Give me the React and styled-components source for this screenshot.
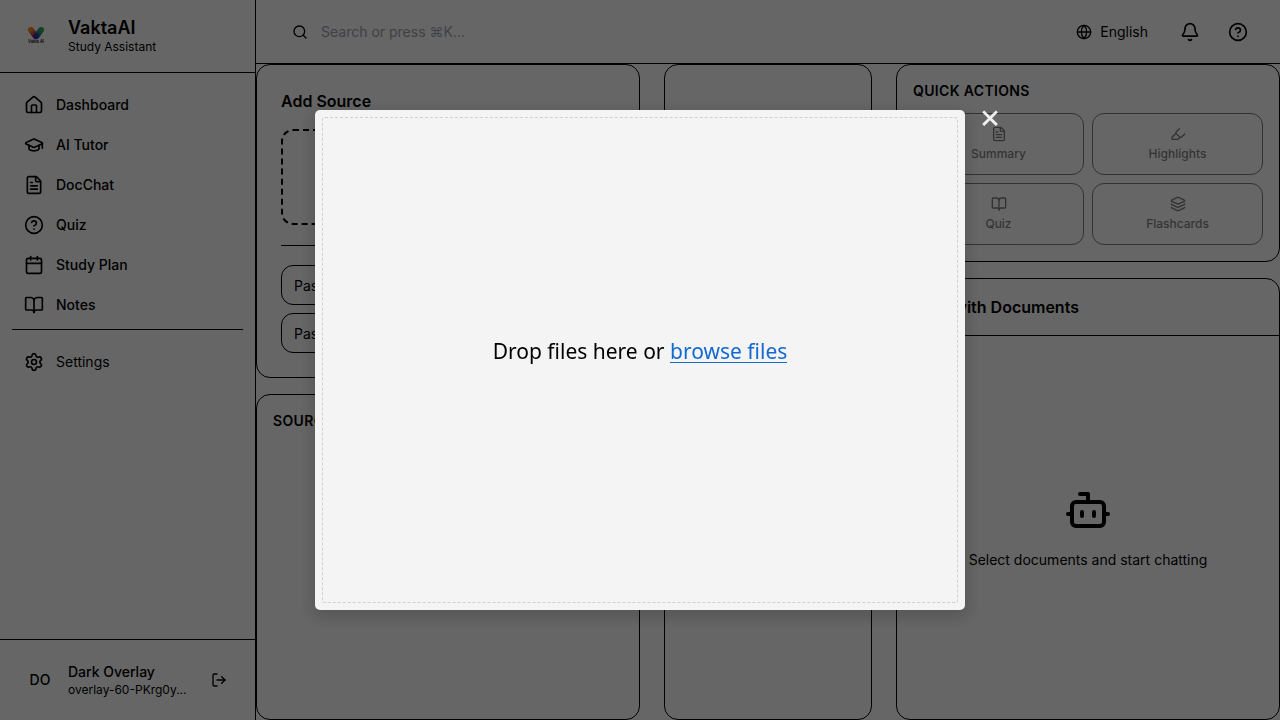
import React from "react";
import styled, { createGlobalStyle } from "styled-components";
import {
  House, GraduationCap, FileText, CircleHelp, Calendar, BookOpen, Settings,
  LogOut, Search, Globe, Bell, Highlighter, Layers, Bot,
} from "lucide-react";

const GlobalStyle = createGlobalStyle`
  *, *::before, *::after { box-sizing: border-box; }
  body { margin: 0; background: #fff; color: #000; font-family: Inter, "Noto Sans", sans-serif; font-size: 14px; line-height: 20px; overflow: hidden; }
  h1, h2, h3, p { margin: 0; }
  button, input { font: inherit; color: inherit; background: none; border: 0; padding: 0; margin: 0; outline: 0; }
  svg { flex-shrink: 0; display: block; }
`;

const Shell = styled.div`display: flex; width: 100vw; height: 100vh; overflow: hidden;`;

const Sidebar = styled.aside`
  width: 256px; flex-shrink: 0; display: flex; flex-direction: column;
  border-right: 1px solid #000;
`;
const Brand = styled.div`
  height: 73px; padding: 16px; display: flex; align-items: center; gap: 12px;
  border-bottom: 1px solid #000;
`;
const LogoBox = styled.div`width: 40px; height: 40px; display: grid; place-items: center;`;
const BrandName = styled.h1`font-size: 18px; line-height: 22.5px; font-weight: 600;`;
const Small = styled.p`
  font-size: 12px; line-height: 16px;
  overflow: hidden; text-overflow: ellipsis; white-space: nowrap;
`;
const Nav = styled.nav`flex: 1; padding: 12px;`;
const NavItem = styled.a`
  height: 40px; padding: 0 12px; display: flex; align-items: center; gap: 12px;
  font-weight: ${(p) => (p.$plain ? 400 : 500)};
`;
const NavDivider = styled.div`height: 1px; background: #000; margin: 4px 0 12px;`;
const Account = styled.div`
  height: 81px; padding: 16px 20px; display: flex; align-items: center; gap: 8px;
  border-top: 1px solid #000;
`;
const Avatar = styled.div`width: 40px; flex-shrink: 0; text-align: center; font-weight: 500;`;
const AccountText = styled.div`flex: 1; min-width: 0; white-space: nowrap;`;
const AccountName = styled.p`font-weight: 500;`;
const LogoutButton = styled.button`width: 32px; flex-shrink: 0; display: grid; place-items: center;`;

const Content = styled.div`flex: 1; min-width: 0; display: flex; flex-direction: column;`;
const TopBar = styled.header`
  height: 64px; padding: 0 32px 0 36px; display: flex; align-items: center;
  border-bottom: 1px solid #000;
`;
const SearchField = styled.label`flex: 1; display: flex; align-items: center; gap: 13px;`;
const SearchInput = styled.input`width: 300px; &::placeholder { color: #9ca3af; opacity: 1; }`;
const TopActions = styled.div`display: flex; align-items: center; gap: 28px;`;
const Language = styled.button`display: flex; align-items: center; gap: 8px; margin-right: 4px;`;

const Board = styled.main`
  flex: 1; min-height: 0; display: grid; gap: 24px;
  grid-template-columns: 384px 1fr 384px;
`;
const Column = styled.section`display: flex; flex-direction: column; gap: 16px; min-height: 0;`;
const Card = styled.div`
  border: 1px solid #000; border-radius: 14px; padding: ${(p) => p.$pad || "0"};
  flex: ${(p) => (p.$fill ? 1 : "none")};
  display: flex; flex-direction: column;
`;
const CardTitle = styled.h2`font-size: 16px; line-height: 24px; font-weight: 600;`;
const Overline = styled.h3`font-size: 14px; line-height: 20px; font-weight: 600; letter-spacing: 0.35px;`;
const DropZone = styled.div`
  height: 96px; margin-top: 16px; border: 2px dashed #000; border-radius: 12px;
`;
const Divider = styled.div`height: 1px; background: #000; margin: 20px 0 19px;`;
const UrlInput = styled.input`
  height: 40px; width: 100%; border: 1px solid #000; border-radius: 12px; padding: 0 12px;
  & + & { margin-top: 8px; }
  &::placeholder { color: #000; opacity: 1; }
`;
const ActionGrid = styled.div`
  margin-top: 12px; display: grid; grid-template-columns: 1fr 1fr; gap: 8px;
`;
const Action = styled.button`
  height: 62px; border: 1px solid #000; border-radius: 12px; opacity: 0.5;
  display: flex; flex-direction: column; align-items: center; justify-content: center; gap: 4px;
  font-size: 12px; line-height: 16px; font-weight: 500;
`;
const ChatHeader = styled.div`
  height: 57px; padding: 0 16px; display: flex; align-items: center; gap: 8px;
  border-bottom: 1px solid #000;
`;
const EmptyChat = styled.div`
  flex: 1; display: flex; flex-direction: column; align-items: center; justify-content: center;
  gap: 16px;
`;

const Overlay = styled.div`
  position: fixed; inset: 0; background: rgba(0, 0, 0, 0.6);
  display: grid; place-items: center;
`;
const Dialog = styled.div`
  position: relative; width: 650px; height: 500px; padding: 7px; border-radius: 5px;
  background: #f4f4f4; box-shadow: 0 5px 15px 4px rgba(0, 0, 0, 0.15);
  font-family: "Noto Sans", sans-serif;
`;
const DialogDrop = styled.div`
  height: 100%; border: 1px dashed #cfcfcf; border-radius: 3px;
  display: grid; place-items: center;
`;
const DropText = styled.p`font-size: 21px; line-height: 30px; padding-bottom: 18px;`;
const Browse = styled.button`
  color: #1269cf; border-bottom: 1px solid #1269cf; line-height: 22px;
`;
const Close = styled.button`
  position: absolute; top: -13px; right: -40px; width: 30px; height: 38px;
  font-family: Inter, sans-serif; font-size: 34px; line-height: 38px;
  color: rgba(255, 255, 255, 0.9);
  display: grid; place-items: center;
`;

const Logo = () => (
  <svg width="18" height="18" viewBox="0 0 18 18">
    <defs>
      <linearGradient id="warm" x1="0" y1="0" x2="0.8" y2="1">
        <stop offset="0" stopColor="#f58a20" />
        <stop offset="0.5" stopColor="#e8483c" />
        <stop offset="1" stopColor="#5b2a8c" />
      </linearGradient>
      <linearGradient id="cool" x1="1" y1="0" x2="0.2" y2="1">
        <stop offset="0" stopColor="#31a84c" />
        <stop offset="0.5" stopColor="#1b8a8a" />
        <stop offset="1" stopColor="#3a3192" />
      </linearGradient>
    </defs>
    <path d="M4 3 L8.5 9" stroke="url(#warm)" strokeWidth="6" strokeLinecap="round" />
    <path d="M14 3 L9.5 9" stroke="url(#cool)" strokeWidth="6" strokeLinecap="round" />
    <text x="9" y="16" textAnchor="middle" fontSize="4.3" fontWeight="500" fontFamily="Inter" textLength="16">Vakta AI</text>
  </svg>
);

const navItems = [
  [House, "Dashboard"],
  [GraduationCap, "AI Tutor"],
  [FileText, "DocChat"],
  [CircleHelp, "Quiz"],
  [Calendar, "Study Plan"],
  [BookOpen, "Notes"],
];

const actions = [
  [FileText, "Summary"],
  [Highlighter, "Highlights"],
  [BookOpen, "Quiz"],
  [Layers, "Flashcards"],
];

export default function App() {
  return (
    <>
      <GlobalStyle />
      <Shell>
        <Sidebar>
          <Brand>
            <LogoBox><Logo /></LogoBox>
            <div>
              <BrandName>VaktaAI</BrandName>
              <Small>Study Assistant</Small>
            </div>
          </Brand>
          <Nav>
            {navItems.map(([Icon, label]) => (
              <NavItem key={label}><Icon size={20} />{label}</NavItem>
            ))}
            <NavDivider />
            <NavItem $plain><Settings size={20} />Settings</NavItem>
          </Nav>
          <Account>
            <Avatar>DO</Avatar>
            <AccountText>
              <AccountName>Dark Overlay</AccountName>
              <Small>overlay-60-PKrg0y...</Small>
            </AccountText>
            <LogoutButton><LogOut size={16} /></LogoutButton>
          </Account>
        </Sidebar>
        <Content>
          <TopBar>
            <SearchField>
              <Search size={16} />
              <SearchInput placeholder="Search or press ⌘K..." />
            </SearchField>
            <TopActions>
              <Language><Globe size={16} />English</Language>
              <Bell size={20} />
              <CircleHelp size={20} />
            </TopActions>
          </TopBar>
          <Board>
            <Column>
              <Card $pad="24px">
                <CardTitle>Add Source</CardTitle>
                <DropZone />
                <Divider />
                <UrlInput placeholder="Paste YouTube URL" />
                <UrlInput placeholder="Paste website URL" />
              </Card>
              <Card $fill $pad="16px">
                <Overline>SOURCES</Overline>
              </Card>
            </Column>
            <Column><Card $fill /></Column>
            <Column>
              <Card $pad="16px">
                <Overline>QUICK ACTIONS</Overline>
                <ActionGrid>
                  {actions.map(([Icon, label]) => (
                    <Action key={label}><Icon size={16} />{label}</Action>
                  ))}
                </ActionGrid>
              </Card>
              <Card $fill>
                <ChatHeader><CardTitle>Chat with Documents</CardTitle></ChatHeader>
                <EmptyChat>
                  <Bot size={48} />
                  <p>Select documents and start chatting</p>
                </EmptyChat>
              </Card>
            </Column>
          </Board>
        </Content>
      </Shell>
      <Overlay>
        <Dialog>
          <Close aria-label="Close">×</Close>
          <DialogDrop>
            <DropText>Drop files here or <Browse>browse files</Browse></DropText>
          </DialogDrop>
        </Dialog>
      </Overlay>
    </>
  );
}
